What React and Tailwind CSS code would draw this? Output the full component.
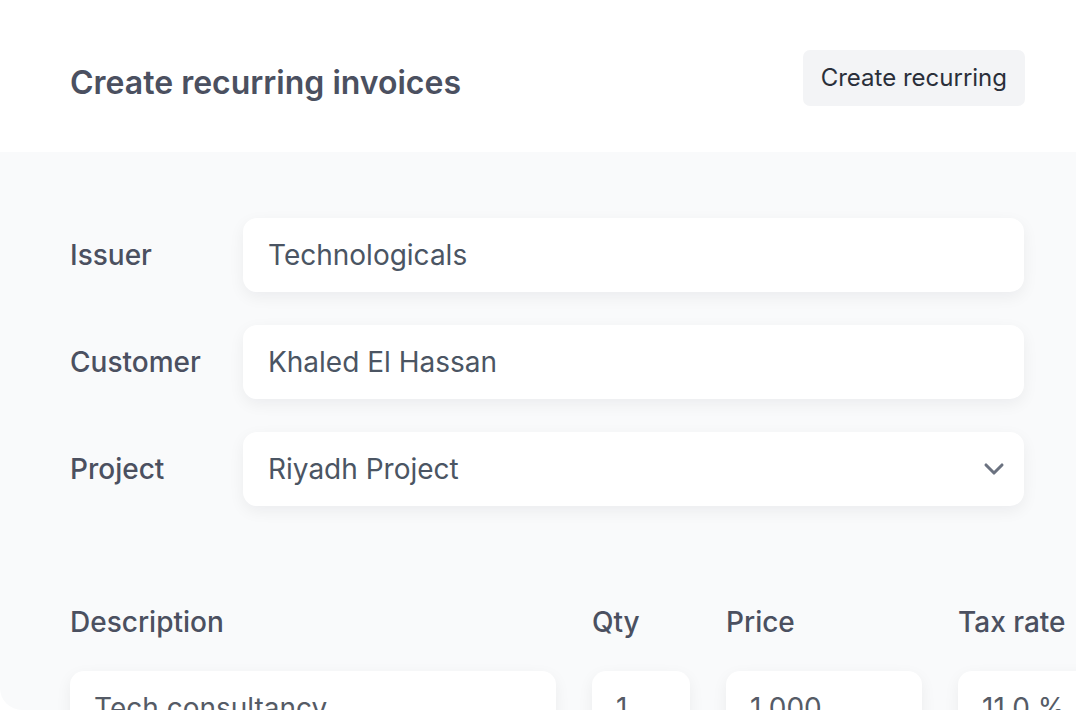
import { ChevronDown } from 'lucide-react';

const fields = [
    { label: 'Issuer', value: 'Technologicals' },
    { label: 'Customer', value: 'Khaled El Hassan' },
    { label: 'Project', value: 'Riyadh Project', select: true },
];

const columns = [
    { title: 'Description', value: 'Tech consultancy', width: 'w-[486px]' },
    { title: 'Qty', value: '1', width: 'w-[98px]' },
    { title: 'Price', value: '1,000', width: 'w-[196px]' },
    { title: 'Tax rate', value: '11.0 %', width: 'w-[200px]' },
];

const boxShadow = 'shadow-[0_5px_16px_rgba(17,24,39,0.06)]';

export default function App() {
    return (
        <div className="w-[1076px] h-[710px] overflow-hidden bg-white text-[#4b5563]"
            style={{ fontFamily: 'Inter, "Noto Sans", sans-serif' }}>
            {/* header */}
            <div className="h-[152px] flex items-start justify-between pl-[70px] pr-[51px] pt-[50px]">
                <h1 className="mt-[11px] text-[32px] leading-[44px] font-semibold text-[#4b5060]">
                    Create recurring invoices
                </h1>
                <button className="h-[56px] px-[18px] rounded-[7px] bg-[#f3f4f6] text-[24px] text-[#2a2f3a]">
                    Create recurring
                </button>
            </div>

            {/* form panel */}
            <div className="h-[558px] bg-[#f9fafb] rounded-bl-[22px] pl-[70px] pr-[52px] pt-[66px]">
                <div className="grid grid-cols-[173px_1fr] items-center gap-y-[33px]">
                    {fields.map((f) => (
                        <div key={f.label} className="contents">
                            <div className="text-[28px] font-medium text-[#4b5060]">{f.label}</div>
                            <div className={'h-[74px] rounded-[14px] bg-white flex items-center justify-between pl-[25px] pr-[14px] text-[28px] ' + boxShadow}>
                                <span>{f.value}</span>
                                {f.select && <ChevronDown className="w-[32px] h-[32px] text-[#6b7280]" strokeWidth={2.3} />}
                            </div>
                        </div>
                    ))}
                </div>

                {/* line items */}
                <div className="mt-[95px] flex gap-x-[36px] w-max">
                    {columns.map((c) => (
                        <div key={c.title} className={'shrink-0 ' + c.width}>
                            <div className="text-[28px] leading-[42px] font-medium text-[#4b5060]">{c.title}</div>
                            <div className={'mt-[28px] h-[74px] rounded-[14px] bg-white flex items-center px-[24px] text-[28px] text-[#555b66] ' + boxShadow}>
                                {c.value}
                            </div>
                        </div>
                    ))}
                </div>
            </div>
        </div>
    );
}
